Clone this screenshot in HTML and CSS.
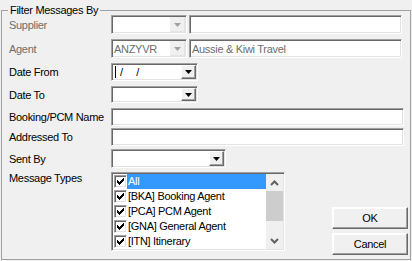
FILE: index.html
```html
<!DOCTYPE html>
<html><head>
  <title>Filter Messages</title>
  <link rel="stylesheet" href="styles.css">
</head>
<body>
  <fieldset class="filter">
    <legend>Filter Messages By</legend>

    <div class="row r-tall">
      <span class="lbl off">Supplier</span>
      <div class="combo off w-code"><span class="val"></span><span class="drop"><svg width="7" height="4"><path d="M0 0h7L3.5 4z"/></svg></span></div>
      <div class="edit off w-name"></div>
    </div>

    <div class="row r-tall">
      <span class="lbl off">Agent</span>
      <div class="combo off w-code"><span class="val">ANZYVR</span><span class="drop"><svg width="7" height="4"><path d="M0 0h7L3.5 4z"/></svg></span></div>
      <div class="edit off w-name">Aussie &amp; Kiwi Travel</div>
    </div>

    <div class="row r-date">
      <span class="lbl">Date From</span>
      <div class="combo w-date"><span class="val"><span class="caret"></span><span class="mask">/   /</span></span><span class="drop"><svg width="7" height="4"><path d="M0 0h7L3.5 4z"/></svg></span></div>
    </div>

    <div class="row r-date2">
      <span class="lbl">Date To</span>
      <div class="combo w-date"><span class="val"></span><span class="drop"><svg width="7" height="4"><path d="M0 0h7L3.5 4z"/></svg></span></div>
    </div>

    <div class="row r-text">
      <span class="lbl">Booking/PCM Name</span>
      <div class="edit w-wide"></div>
    </div>

    <div class="row r-text2">
      <span class="lbl">Addressed To</span>
      <div class="edit w-wide"></div>
    </div>

    <div class="row r-sent">
      <span class="lbl">Sent By</span>
      <div class="combo w-sent"><span class="val"></span><span class="drop"><svg width="7" height="4"><path d="M0 0h7L3.5 4z"/></svg></span></div>
    </div>

    <div class="row r-types">
      <span class="lbl">Message Types</span>
      <div class="list">
        <ul class="items">
          <li class="sel"><span class="chk"><svg width="7" height="7"><path d="M0 2h1v3H0zM1 3h1v3H1zM2 4h1v3H2zM3 3h1v3H3zM4 2h1v3H4zM5 1h1v3H5zM6 0h1v3H6z"/></svg></span><span class="txt">All</span></li>
          <li><span class="chk"><svg width="7" height="7"><path d="M0 2h1v3H0zM1 3h1v3H1zM2 4h1v3H2zM3 3h1v3H3zM4 2h1v3H4zM5 1h1v3H5zM6 0h1v3H6z"/></svg></span><span class="txt">[BKA] Booking Agent</span></li>
          <li><span class="chk"><svg width="7" height="7"><path d="M0 2h1v3H0zM1 3h1v3H1zM2 4h1v3H2zM3 3h1v3H3zM4 2h1v3H4zM5 1h1v3H5zM6 0h1v3H6z"/></svg></span><span class="txt">[PCA] PCM Agent</span></li>
          <li><span class="chk"><svg width="7" height="7"><path d="M0 2h1v3H0zM1 3h1v3H1zM2 4h1v3H2zM3 3h1v3H3zM4 2h1v3H4zM5 1h1v3H5zM6 0h1v3H6z"/></svg></span><span class="txt">[GNA] General Agent</span></li>
          <li><span class="chk"><svg width="7" height="7"><path d="M0 2h1v3H0zM1 3h1v3H1zM2 4h1v3H2zM3 3h1v3H3zM4 2h1v3H4zM5 1h1v3H5zM6 0h1v3H6z"/></svg></span><span class="txt">[ITN] Itinerary</span></li>
        </ul>
        <div class="scroll">
          <span class="arrow"><svg width="9" height="6"><path d="M1 5L4.5 1.5L8 5" fill="none" stroke="#606060" stroke-width="2"/></svg></span>
          <span class="thumb"></span>
          <span class="track"></span>
          <span class="arrow"><svg width="9" height="6"><path d="M1 1L4.5 4.5L8 1" fill="none" stroke="#606060" stroke-width="2"/></svg></span>
        </div>
      </div>
      <div class="actions">
        <button class="btn">OK</button>
        <button class="btn">Cancel</button>
      </div>
    </div>
  </fieldset>
</body></html>
```

FILE: styles.css
```css
/* classic dialog look */
body {
  margin: 0;
  padding: 5px 1px 0 1px;
  background: #f0f0f0;
  font: 11px "Liberation Sans", Arial, sans-serif;
  letter-spacing: -0.3px;
  color: #000;
  overflow: hidden;
}

.filter {
  margin: 0;
  padding: 0 2px 4px 7px;
  border: 1px solid #a0a0a0;
  min-width: 0;
}

.filter legend {
  margin-left: -1px;
  padding: 0 2px;
  line-height: 10px;
}

.row {
  display: flex;
  align-items: center;
}

.r-tall { height: 19px; margin-bottom: 5px; }
.r-date { height: 18px; margin-bottom: 5px; }
.r-date2 { height: 17px; margin-bottom: 5px; }
.r-text { height: 18px; margin-bottom: 2px; }
.r-text2 { height: 18px; margin-bottom: 3px; }
.r-sent { height: 19px; margin-bottom: 4px; }

.lbl {
  flex: none;
  width: 102px;
}

.lbl.off {
  color: #6d6d6d;
}

/* sunken boxes */
.combo,
.edit {
  display: flex;
  align-items: center;
  height: 100%;
  box-sizing: border-box;
  padding: 1px;
  background: #fff;
  border: 1px solid;
  border-color: #a0a0a0 #fff #fff #a0a0a0;
  box-shadow: inset 1px 1px #696969, inset -1px -1px #e3e3e3;
}

.edit {
  padding: 1px 2px;
}

.combo.off,
.edit.off {
  color: #6d6d6d;
}

.w-code { width: 76px; }
.w-name { width: 213px; margin-left: 2px; }
.w-date { width: 87px; }
.w-wide { width: 293px; }
.w-sent { width: 115px; }

.combo .val {
  flex: 1;
  padding-left: 1px;
  white-space: pre;
}

.caret {
  display: inline-block;
  width: 1px;
  height: 12px;
  margin: 0 4px 0 1px;
  background: #000;
  vertical-align: -2px;
}

.mask {
  letter-spacing: 1px;
}

.drop {
  display: flex;
  align-items: center;
  justify-content: center;
  width: 15px;
  height: 100%;
  box-sizing: border-box;
  background: #f0f0f0;
  border: 1px solid;
  border-color: #fff #696969 #696969 #fff;
  box-shadow: inset -1px -1px #a0a0a0;
}

.combo.off .drop {
  border-color: #f0f0f0 #e3e3e3 #e3e3e3 #f0f0f0;
  box-shadow: none;
}

.drop svg {
  fill: #000;
}

.combo.off .drop svg {
  fill: #a0a0a0;
}

/* check list */
.r-types {
  align-items: flex-start;
}

.list {
  display: flex;
  width: 174px;
  height: 79px;
  box-sizing: border-box;
  padding: 1px;
  background: #fff;
  border: 1px solid;
  border-color: #a0a0a0 #fff #fff #a0a0a0;
  box-shadow: inset 1px 1px #696969, inset -1px -1px #e3e3e3;
}

.items {
  flex: 1;
  margin: 0;
  padding: 0;
  list-style: none;
}

.items li {
  display: flex;
  align-items: center;
  height: 15px;
}

.chk {
  display: flex;
  align-items: center;
  justify-content: center;
  flex: none;
  width: 13px;
  height: 13px;
  margin: 0 0 0 1px;
  box-sizing: border-box;
  background: #fff;
  border: 1px solid;
  border-color: #a0a0a0 #fff #fff #a0a0a0;
  box-shadow: inset 1px 1px #696969, inset -1px -1px #e3e3e3;
}

.txt {
  flex: 1;
  height: 100%;
  line-height: 15px;
  padding-left: 1px;
}

.sel .txt {
  background: #3399ff;
  color: #fff;
}

.scroll {
  display: flex;
  flex-direction: column;
  width: 17px;
  background: #f0f0f0;
}

.arrow {
  display: flex;
  align-items: center;
  justify-content: center;
  height: 17px;
}

.thumb {
  height: 30px;
  background: #cdcdcd;
}

.track {
  flex: 1;
}

.actions {
  display: flex;
  flex-direction: column;
  gap: 4px;
  margin: 35px 0 0 auto;
}

.btn {
  width: 76px;
  height: 22px;
  padding: 0;
  font: inherit;
  letter-spacing: inherit;
  color: #000;
  background: #f0f0f0;
  border: 1px solid;
  border-color: #fff #696969 #696969 #fff;
  box-shadow: inset -1px -1px #a0a0a0, inset 1px 1px #fff;
}
```
